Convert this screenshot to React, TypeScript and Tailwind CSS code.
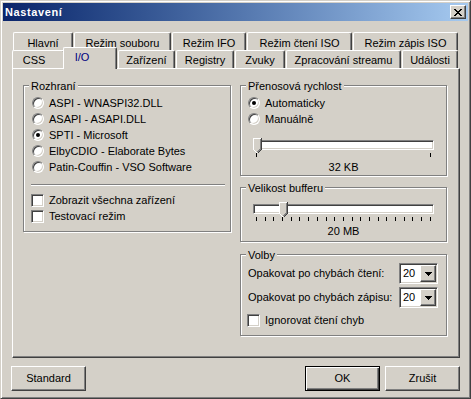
import React from 'react';

const raised =
  'border border-t-white border-l-white border-r-[#404040] border-b-[#404040] shadow-[inset_-1px_-1px_0_#808080]';
const sunken =
  'border border-t-[#808080] border-l-[#808080] border-r-white border-b-white shadow-[inset_1px_1px_0_#404040,inset_-1px_-1px_0_#D4D0C8]';

const backTabs = [
  { label: 'Hlavní', w: 'w-[60px]' },
  { label: 'Režim souboru', w: 'w-[97px]' },
  { label: 'Režim IFO', w: 'w-[74px]' },
  { label: 'Režim čtení ISO', w: 'w-[105px]' },
  { label: 'Režim zápis ISO', w: 'w-[105px]' },
];

const frontTabs = [
  { label: 'CSS', w: 'w-[53px] pr-[9px]' },
  { label: 'I/O', w: 'w-[54px]', active: true },
  { label: 'Zařízení', w: 'w-[57px]' },
  { label: 'Registry', w: 'w-[58px]' },
  { label: 'Zvuky', w: 'w-[50px]' },
  { label: 'Zpracování streamu', w: 'w-[115px]' },
  { label: 'Události', w: 'w-[56px]' },
];

function Tab({ label, w, pad }: { label: string; w: string; pad: string }) {
  return (
    <div
      className={`flex h-[18px] shrink-0 justify-center whitespace-nowrap rounded-t-[2px] border-t border-l border-white border-r border-r-[#404040] bg-[#D4D0C8] shadow-[inset_-1px_0_0_#808080] ${pad} ${w}`}
    >
      {label}
    </div>
  );
}

function Radio({ checked }: { checked?: boolean }) {
  return (
    <span className={`flex h-[12px] w-[12px] shrink-0 items-center justify-center rounded-full bg-white ${sunken}`}>
      {checked && <span className="h-[4px] w-[4px] rounded-full bg-black" />}
    </span>
  );
}

function Check() {
  return <span className={`h-[13px] w-[13px] shrink-0 bg-white ${sunken}`} />;
}

function Group({ label, className, children }: { label: string; className: string; children?: React.ReactNode }) {
  return (
    <div className={`relative shrink-0 border border-[#808080] shadow-[inset_1px_1px_0_#fff,1px_1px_0_#fff] ${className}`}>
      <span className="absolute left-[5px] top-[-6px] bg-[#D4D0C8] px-[2px] leading-[13px]">{label}</span>
      {children}
    </div>
  );
}

function Thumb({ className }: { className: string }) {
  return (
    <svg width="9" height="16" viewBox="0 0 9 16" shapeRendering="crispEdges" className={`absolute top-[-3px] ${className}`}>
      <polygon points="0,0 9,0 9,11 4.5,15.5 0,11" fill="#D4D0C8" />
      <polyline points="0.5,11 0.5,0.5 8,0.5" fill="none" stroke="#fff" />
      <polyline points="0.5,11.5 4,15" fill="none" stroke="#fff" />
      <polyline points="8.5,0 8.5,11.5 4.5,15.5" fill="none" stroke="#404040" />
      <polyline points="7.5,1 7.5,11 4.5,14" fill="none" stroke="#808080" />
    </svg>
  );
}

function Slider({ thumb, ticks, value, className }: { thumb: string; ticks: number; value: string; className: string }) {
  return (
    <div className={`mx-[12px] ${className}`}>
      <div className={`relative h-[10px] bg-white ${sunken}`}>
        <Thumb className={thumb} />
      </div>
      <div className="mt-[3px] flex h-[4px] justify-between px-[3px]">
        {Array.from({ length: ticks }).map((_, i) => (
          <span key={i} className="h-full w-px bg-black" />
        ))}
      </div>
      <div className="mt-[4px] text-center leading-[13px]">{value}</div>
    </div>
  );
}

function Combo() {
  return (
    <div className={`flex h-[21px] w-[39px] bg-white p-[1px] ${sunken}`}>
      <span className="flex-1 pl-[2px] leading-[17px]">20</span>
      <span className={`flex w-[16px] items-center justify-center bg-[#D4D0C8] ${raised}`}>
        <svg width="7" height="4" viewBox="0 0 7 4" shapeRendering="crispEdges">
          <rect x="0" y="0" width="7" height="1" fill="#000" />
          <rect x="1" y="1" width="5" height="1" fill="#000" />
          <rect x="2" y="2" width="3" height="1" fill="#000" />
          <rect x="3" y="3" width="1" height="1" fill="#000" />
        </svg>
      </span>
    </div>
  );
}

export default function App() {
  return (
    <div className="h-[399px] w-[471px] overflow-hidden border border-[#D4D0C8] border-r-[#404040] border-b-[#404040] bg-[#D4D0C8] p-[2px] font-['Liberation_Sans',Arial,sans-serif] text-[11px] leading-[13px] text-black shadow-[inset_1px_1px_0_#fff,inset_-1px_-1px_0_#808080]">
      {/* title bar */}
      <div className="flex h-[18px] items-center justify-between bg-linear-to-r from-[#0A246A] to-[#A6CAF0] pl-[2px] pr-[2px]">
        <span className="text-[11px] font-bold tracking-[0.6px] text-white">Nastavení</span>
        <button className={`flex h-[14px] w-[16px] items-center justify-center bg-[#D4D0C8] ${raised}`}>
          <svg width="8" height="7" viewBox="0 0 8 7" shapeRendering="crispEdges">
            <rect x="0" y="0" width="2" height="1" fill="#000" />
            <rect x="6" y="0" width="2" height="1" fill="#000" />
            <rect x="1" y="1" width="2" height="1" fill="#000" />
            <rect x="5" y="1" width="2" height="1" fill="#000" />
            <rect x="2" y="2" width="4" height="1" fill="#000" />
            <rect x="3" y="3" width="2" height="1" fill="#000" />
            <rect x="2" y="4" width="4" height="1" fill="#000" />
            <rect x="1" y="5" width="2" height="1" fill="#000" />
            <rect x="5" y="5" width="2" height="1" fill="#000" />
            <rect x="0" y="6" width="2" height="1" fill="#000" />
            <rect x="6" y="6" width="2" height="1" fill="#000" />
          </svg>
        </button>
      </div>

      {/* tab control */}
      <div className="ml-[9px] mt-[11px] w-[448px]">
        <div className="flex h-[18px] gap-[1px] pl-[1px]">
          {backTabs.map((t) => (
            <Tab key={t.label} label={t.label} w={t.w} pad="pt-[4px]" />
          ))}
        </div>
        <div className="flex h-[18px] items-end gap-[1px]">
          {frontTabs.map((t) =>
            t.active ? (
              <div
                key={t.label}
                className={`relative z-10 -mb-px ml-[-3px] flex h-[22px] shrink-0 justify-center rounded-t-[2px] border-t border-l border-white border-r border-r-[#404040] bg-[#D4D0C8] pr-[16px] pt-[3px] text-[#000080] shadow-[inset_-1px_0_0_#808080] ${t.w}`}
              >
                {t.label}
              </div>
            ) : (
              <Tab key={t.label} label={t.label} w={t.w} pad="pt-[3px]" />
            ),
          )}
        </div>

        <div className={`flex h-[290px] gap-[9px] pl-[10px] pt-[16px] ${raised}`}>
          {/* left column */}
          <Group label="Rozhraní" className="h-[147px] w-[208px]">
            <div className="flex flex-col pt-[9px]">
              {[
                'ASPI - WNASPI32.DLL',
                'ASAPI - ASAPI.DLL',
                'SPTI - Microsoft',
                'ElbyCDIO - Elaborate Bytes',
                'Patin-Couffin - VSO Software',
              ].map((l) => (
                <label key={l} className="flex h-[16px] items-center gap-[5px] pl-[8px]">
                  <Radio checked={l === 'SPTI - Microsoft'} />
                  <span>{l}</span>
                </label>
              ))}
              <div className="ml-[7px] mr-[5px] mt-[9px] h-[2px] border-t border-b border-t-[#808080] border-b-white" />
              <div className="mt-[6px] flex flex-col">
                {['Zobrazit všechna zařízení', 'Testovací režim'].map((l) => (
                  <label key={l} className="flex h-[16px] items-center gap-[5px] pl-[7px]">
                    <Check />
                    <span>{l}</span>
                  </label>
                ))}
              </div>
            </div>
          </Group>

          {/* right column */}
          <div className="flex w-[207px] flex-col">
            <Group label="Přenosová rychlost" className="h-[91px]">
              <div className="flex flex-col pt-[9px]">
                <label className="flex h-[16px] items-center gap-[5px] pl-[7px]">
                  <Radio checked />
                  <span>Automaticky</span>
                </label>
                <label className="flex h-[16px] items-center gap-[5px] pl-[7px]">
                  <Radio />
                  <span>Manuálně</span>
                </label>
                <Slider thumb="left-[-1px]" ticks={2} value="32 KB" className="mt-[13px]" />
              </div>
            </Group>

            <Group label="Velikost bufferu" className="mt-[11px] h-[55px]">
              <Slider thumb="left-[25px]" ticks={21} value="20 MB" className="mt-[16px]" />
            </Group>

            <Group label="Volby" className="mt-[12px] h-[82px]">
              <div className="flex flex-col pt-[8px]">
                <div className="flex h-[21px] items-center justify-between pl-[7px] pr-[8px]">
                  <span>Opakovat po chybách čtení:</span>
                  <Combo />
                </div>
                <div className="mt-[3px] flex h-[21px] items-center justify-between pl-[7px] pr-[8px]">
                  <span>Opakovat po chybách zápisu:</span>
                  <Combo />
                </div>
                <label className="mt-[4px] flex h-[16px] items-center gap-[5px] pl-[6px]">
                  <Check />
                  <span>Ignorovat čtení chyb</span>
                </label>
              </div>
            </Group>
          </div>
        </div>
      </div>

      {/* buttons */}
      <div className="ml-[8px] mt-[8px] flex w-[449px]">
        <button className={`h-[25px] w-[75px] bg-[#D4D0C8] ${raised}`}>Standard</button>
        <button className="ml-auto h-[25px] w-[75px] border border-black bg-[#D4D0C8] shadow-[inset_1px_1px_0_#fff,inset_-1px_-1px_0_#404040,inset_-2px_-2px_0_#808080]">
          OK
        </button>
        <button className={`ml-[5px] h-[25px] w-[75px] bg-[#D4D0C8] ${raised}`}>Zrušit</button>
      </div>
    </div>
  );
}
